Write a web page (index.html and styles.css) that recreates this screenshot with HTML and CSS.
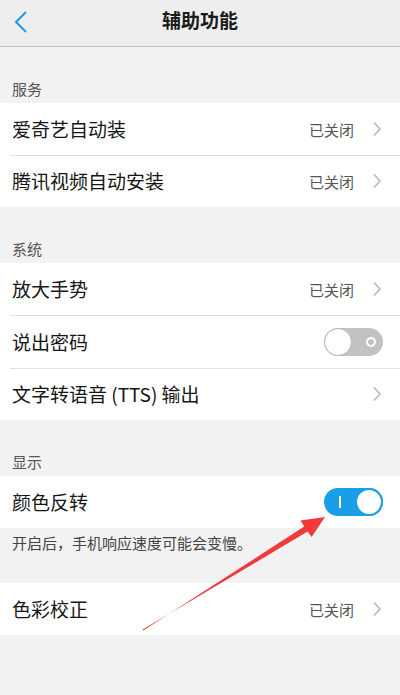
FILE: index.html
```html
<!DOCTYPE html>
<html lang="zh-CN">
<head>
<meta charset="utf-8">
<title>辅助功能</title>
<link rel="stylesheet" href="styles.css">
</head>
<body>
<div class="page">
  <header class="topbar">
    <svg class="back" width="16" height="24" viewBox="0 0 16 24"><path d="M13 2 L3 12 L13 22" fill="none" stroke="#1e9be3" stroke-width="2"/></svg>
    <h1 class="title">辅助功能</h1>
  </header>

  <div class="label">服务</div>
  <div class="group">
    <div class="row"><span class="name">爱奇艺自动装</span><span class="status">已关闭</span><svg class="chev" width="10" height="16" viewBox="0 0 10 16"><path d="M2 1.5 L8 8 L2 14.5" fill="none" stroke="#b8b8b8" stroke-width="1.6"/></svg></div>
    <div class="row"><span class="name">腾讯视频自动安装</span><span class="status">已关闭</span><svg class="chev" width="10" height="16" viewBox="0 0 10 16"><path d="M2 1.5 L8 8 L2 14.5" fill="none" stroke="#b8b8b8" stroke-width="1.6"/></svg></div>
  </div>

  <div class="label">系统</div>
  <div class="group">
    <div class="row"><span class="name">放大手势</span><span class="status">已关闭</span><svg class="chev" width="10" height="16" viewBox="0 0 10 16"><path d="M2 1.5 L8 8 L2 14.5" fill="none" stroke="#b8b8b8" stroke-width="1.6"/></svg></div>
    <div class="row tall"><span class="name">说出密码</span><span class="switch off"><span class="ring"></span><span class="knob"></span></span></div>
    <div class="row"><span class="name">文字转语音 (TTS) 输出</span><svg class="chev" width="10" height="16" viewBox="0 0 10 16"><path d="M2 1.5 L8 8 L2 14.5" fill="none" stroke="#b8b8b8" stroke-width="1.6"/></svg></div>
  </div>

  <div class="label">显示</div>
  <div class="group">
    <div class="row"><span class="name">颜色反转</span><span class="switch on"><span class="bar"></span><span class="knob"></span></span></div>
  </div>
  <div class="hint">开启后，手机响应速度可能会变慢。</div>
  <div class="group">
    <div class="row"><span class="name">色彩校正</span><span class="status">已关闭</span><svg class="chev" width="10" height="16" viewBox="0 0 10 16"><path d="M2 1.5 L8 8 L2 14.5" fill="none" stroke="#b8b8b8" stroke-width="1.6"/></svg></div>
  </div>

  <svg class="arrow" width="400" height="695" viewBox="0 0 400 695">
    <polygon points="143.3,630.4 304.2,526.6 300.5,520.4 325,517 311.6,537.1 307.6,531.5 142.7,629.6" fill="#f23a3a"/>
  </svg>
</div>
</body>
</html>
```

FILE: styles.css
```css
* { box-sizing: border-box; }
html, body { margin: 0; padding: 0; }
body {
  background: #f2f2f2;
  font-family: "Noto Sans CJK SC", "Noto Sans", sans-serif;
  color: #222;
}
.page {
  position: relative;
  width: 400px;
  height: 695px;
  overflow: hidden;
}
.topbar {
  height: 47px;
  background: #eeeeee;
  border-bottom: 1px solid #c4c4c4;
  display: flex;
  align-items: center;
  justify-content: center;
  position: relative;
}
.back {
  position: absolute;
  left: 13px;
  top: 10px;
}
.title {
  margin: 0 0 6px 0;
  font-size: 19px;
  font-weight: 700;
  color: #1a1a1a;
  line-height: 24px;
}
.label {
  height: 56px;
  padding: 0 12px 4px;
  display: flex;
  align-items: flex-end;
  font-size: 15px;
  line-height: 20px;
  color: #555;
}
.group {
  background: #fff;
}
.row {
  height: 52px;
  display: flex;
  align-items: center;
  padding: 0 18px 0 12px;
  position: relative;
}
.row.tall { height: 53px; }
.row + .row::before {
  content: "";
  position: absolute;
  left: 10px;
  right: 0;
  top: 0;
  height: 1px;
  background: #e2e2e2;
}
.name {
  flex: 1;
  font-size: 19px;
  line-height: 24px;
  color: #161616;
}
.status {
  font-size: 15px;
  color: #555;
  margin-right: 18px;
}
.chev { display: block; }
.switch {
  position: relative;
  width: 59px;
  height: 28px;
  border-radius: 14px;
  margin-right: -1px;
}
.switch.off { background: #c2c2c2; }
.switch.on { background: #1a9fe6; }
.switch .knob {
  position: absolute;
  top: 0;
  width: 28px;
  height: 28px;
  border-radius: 50%;
  background: #fff;
}
.switch.off .knob { left: 0; border: 1px solid #b8b8b8; }
.switch.on .knob { right: 0; border: 2px solid #1a9fe6; }
.switch .ring {
  position: absolute;
  right: 7px;
  top: 9px;
  width: 10px;
  height: 10px;
  border-radius: 50%;
  border: 2px solid #fff;
}
.switch .bar {
  position: absolute;
  left: 15px;
  top: 8px;
  width: 2px;
  height: 12px;
  background: #fff;
}
.hint {
  height: 55px;
  padding: 5px 12px 0;
  font-size: 15px;
  line-height: 20px;
  color: #444;
}
.arrow {
  position: absolute;
  left: 0;
  top: 0;
  pointer-events: none;
}
```
